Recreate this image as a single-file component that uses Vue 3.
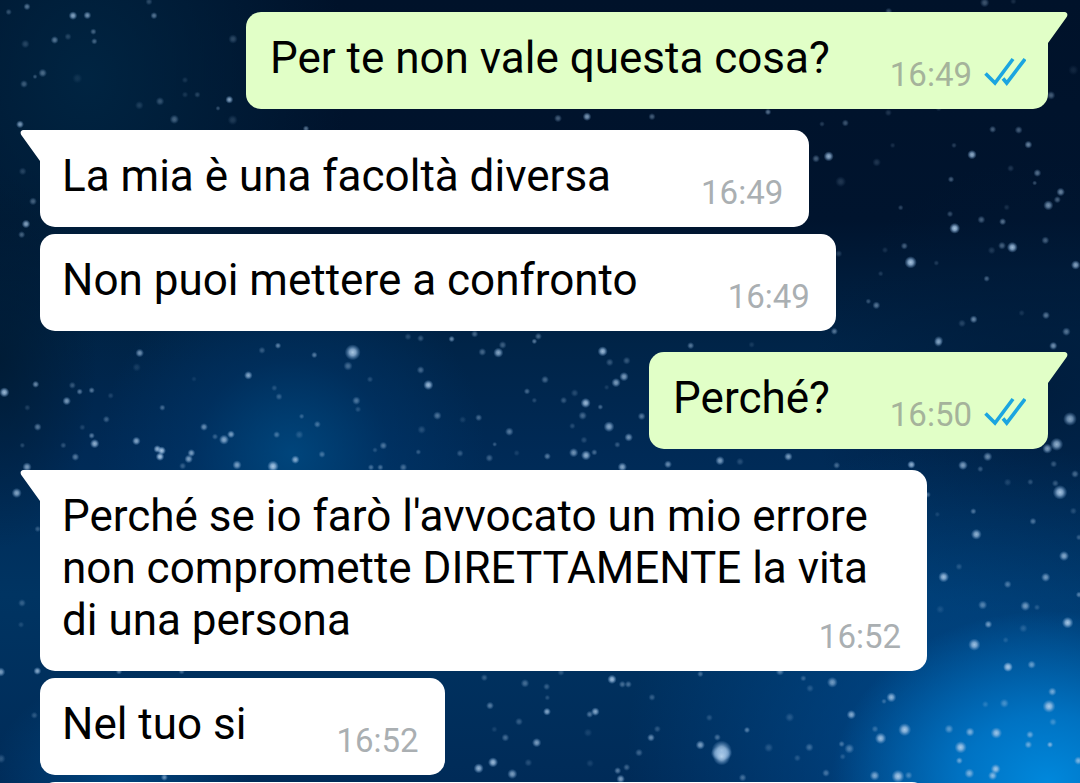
<script setup>
const messages = [
  { id: 1, side: 'out', tail: true, text: 'Per te non vale questa cosa?', time: '16:49' },
  { id: 2, side: 'in', tail: true, text: 'La mia è una facoltà diversa', time: '16:49' },
  { id: 3, side: 'in', text: 'Non puoi mettere a confronto', time: '16:49' },
  { id: 4, side: 'out', tail: true, text: 'Perché?', time: '16:50' },
  { id: 5, side: 'in', tail: true, text: "Perché se io farò l'avvocato un mio errore non compromette DIRETTAMENTE la vita di una persona", time: '16:52' },
  { id: 6, side: 'in', text: 'Nel tuo si', time: '16:52' },
]

// Star clusters: origin of each cluster, then [x, y, radius, opacity] in thirds of a unit.
const clusters = [
  { x: 0, y: 0, stars: [[26, 36, 9, 0.4], [81, 20, 10, 0.6], [219, 47, 12, 0.85], [262, 46, 11, 0.75], [280, 95, 9, 0.5], [283, 124, 9, 0.5], [204, 110, 10, 0.3], [164, 120, 11, 0.6], [76, 132, 12, 0.3], [128, 219, 12, 0.55], [105, 230, 7, 0.4], [72, 252, 11, 0.45], [232, 235, 14, 0.15], [447, 5, 10, 0.35], [462, 47, 10, 0.6], [699, 117, 13, 0.35], [555, 240, 9, 0.2], [592, 284, 9, 0.3], [555, 284, 9, 0.2], [480, 304, 12, 0.4], [418, 316, 12, 0.25], [688, 299, 11, 0.85], [654, 325, 7, 0.4], [523, 358, 13, 0.5], [698, 360, 14, 0.25], [60, 373, 11, 0.8], [1674, 355, 11, 0.5], [1761, 350, 12, 0.8], [1956, 350, 10, 0.5], [2304, 336, 9, 0.6], [918, 386, 9, 0.6]] },
  { x: 0, y: 110, stars: [[68, 184, 11, 0.3], [99, 274, 11, 0.5], [78, 342, 12, 0.85], [65, 374, 10, 0.5]] },
  { x: 860, y: 0, stars: [[374, 8, 13, 0.45], [86, 34, 10, 0.4], [460, 4, 9, 0.2], [640, 210, 14, 0.15], [573, 286, 12, 0.5], [85, 338, 10, 0.25], [236, 324, 9, 0.3]] },
  { x: 800, y: 110, stars: [[66, 42, 8, 0.3], [136, 39, 10, 0.45], [86, 139, 14, 0.9], [48, 146, 11, 0.5], [122, 215, 15, 0.25], [230, 157, 12, 0.25], [278, 106, 8, 0.2], [578, 58, 10, 0.5], [656, 60, 11, 0.5], [685, 104, 11, 0.7], [516, 134, 13, 0.9], [462, 106, 8, 0.3], [632, 175, 10, 0.25], [712, 189, 11, 0.6], [704, 219, 7, 0.4], [782, 246, 12, 0.7], [772, 269, 10, 0.5], [745, 286, 14, 0.75], [453, 208, 9, 0.5], [302, 293, 8, 0.35], [450, 312, 9, 0.4], [464, 355, 15, 1], [544, 329, 11, 0.5], [608, 335, 10, 0.6], [620, 292, 9, 0.2], [637, 412, 15, 0.95], [606, 407, 11, 0.5], [575, 421, 11, 0.25], [736, 391, 11, 0.5], [827, 465, 13, 0.85], [313, 408, 10, 0.5], [332, 457, 17, 1], [255, 420, 9, 0.2], [116, 431, 10, 0.3], [409, 459, 8, 0.25], [242, 491, 8, 0.25], [560, 506, 9, 0.5], [205, 574, 8, 0.4], [229, 586, 11, 0.6], [521, 628, 11, 0.7], [486, 640, 11, 0.3], [738, 616, 11, 0.6], [799, 665, 12, 0.6], [760, 707, 10, 0.5], [103, 664, 10, 0.6], [416, 692, 13, 0.7], [665, 609, 9, 0.2]] },
  { x: 0, y: 330, stars: [[13, 187, 14, 0.95], [107, 163, 10, 0.7], [217, 166, 10, 0.4], [239, 185, 9, 0.6], [275, 181, 9, 0.6], [200, 213, 12, 0.8], [332, 197, 9, 0.25], [419, 69, 12, 0.75], [410, 112, 12, 0.2], [487, 233, 9, 0.5], [319, 268, 10, 0.45], [113, 291, 11, 0.6], [82, 233, 9, 0.25], [247, 292, 9, 0.25], [275, 317, 9, 0.6], [284, 341, 13, 0.9], [190, 346, 9, 0.35], [226, 381, 11, 0.6], [67, 346, 8, 0.3], [409, 333, 12, 0.85], [472, 357, 11, 0.9], [485, 362, 12, 1], [480, 380, 12, 1], [612, 291, 11, 0.7], [672, 329, 14, 0.85], [693, 313, 11, 0.8], [645, 320, 9, 0.4], [574, 369, 11, 0.8], [566, 387, 12, 0.8], [548, 408, 10, 0.4], [711, 405, 13, 0.8], [819, 409, 16, 1], [886, 389, 12, 0.85], [966, 373, 10, 0.5], [830, 314, 10, 0.5], [898, 314, 12, 0.3], [952, 283, 10, 0.5], [905, 259, 8, 0.4], [745, 136, 12, 0.85], [823, 174, 9, 0.3], [837, 200, 10, 0.4], [834, 47, 9, 0.65], [786, 61, 10, 0.4], [943, 75, 9, 0.6], [582, 147, 8, 0.15], [81, 411, 13, 0.8]] },
  { x: 320, y: 330, stars: [[98, 67, 22, 1], [84, 108, 13, 0.5], [150, 148, 9, 0.3], [302, 120, 11, 0.5], [325, 165, 14, 0.95], [109, 212, 12, 0.55], [114, 238, 9, 0.3], [352, 257, 12, 0.55], [305, 299, 12, 0.3], [428, 269, 10, 0.2], [476, 263, 10, 0.5], [568, 305, 12, 0.6], [190, 347, 11, 0.55], [165, 360, 8, 0.3], [295, 366, 8, 0.4], [420, 370, 10, 0.4], [508, 384, 11, 0.45], [524, 343, 7, 0.4], [590, 369, 9, 0.2], [264, 20, 10, 0.3], [302, 25, 10, 0.4], [395, 27, 9, 0.7], [464, 12, 10, 0.5], [487, 66, 11, 0.5], [535, 68, 14, 0.85], [548, 45, 11, 0.45], [655, 19, 10, 0.5], [643, 34, 8, 0.6], [848, 64, 14, 0.95], [869, 97, 11, 0.4], [920, 92, 11, 0.4], [912, 140, 13, 0.8], [888, 158, 13, 0.8], [860, 172, 8, 0.2], [675, 149, 11, 0.5], [621, 184, 9, 0.5], [643, 211, 8, 0.3], [731, 211, 10, 0.4], [764, 189, 11, 0.3], [797, 219, 14, 0.95], [841, 231, 8, 0.5], [788, 257, 12, 0.5], [757, 288, 9, 0.3], [867, 290, 15, 0.85], [926, 322, 12, 0.75], [965, 259, 11, 0.6], [892, 344, 9, 0.4], [792, 330, 10, 0.3], [761, 368, 13, 0.75], [798, 376, 14, 0.9], [823, 367, 9, 0.5], [682, 379, 10, 0.6], [907, 411, 13, 0.85], [250, 412, 11, 0.5], [153, 412, 9, 0.5], [181, 412, 9, 0.5]] },
  { x: 640, y: 340, stars: [[152, 17, 10, 0.6], [335, 14, 9, 0.2], [895, 8, 12, 0.6], [1240, 18, 12, 0.5], [1290, 237, 19, 0.85], [1250, 313, 18, 0.9], [1222, 326, 14, 0.8], [1043, 350, 13, 0.7], [970, 376, 13, 0.5], [813, 374, 11, 0.6], [590, 376, 10, 0.5], [445, 350, 12, 0.8], [240, 362, 13, 0.8], [84, 373, 11, 0.7], [300, 365, 11, 0.3]] },
  { x: 900, y: 440, stars: [[35, 74, 11, 0.7], [188, 76, 13, 0.6], [241, 87, 9, 0.4], [480, 157, 20, 1], [466, 130, 10, 0.4], [461, 72, 10, 0.4], [525, 102, 11, 0.5], [391, 126, 9, 0.35], [323, 127, 11, 0.25], [83, 164, 9, 0.5], [220, 214, 9, 0.55], [229, 283, 15, 0.9], [112, 223, 8, 0.2], [399, 244, 10, 0.55], [520, 213, 10, 0.3], [492, 348, 14, 0.85], [437, 412, 13, 0.75], [131, 411, 15, 0.95], [177, 380, 10, 0.3], [323, 433, 11, 0.55], [248, 495, 13, 0.6], [376, 498, 14, 0.75], [411, 502, 9, 0.3], [121, 508, 12, 0.2], [265, 553, 11, 0.75], [370, 565, 12, 0.3], [503, 548, 16, 1], [223, 614, 17, 0.95], [317, 600, 9, 0.25], [324, 681, 13, 0.8], [394, 674, 11, 0.5], [537, 464, 9, 0.6], [537, 292, 9, 0.4]] },
  { x: 0, y: 460, stars: [[50, 99, 14, 0.85], [66, 429, 11, 0.4], [63, 494, 9, 0.25], [112, 633, 11, 0.85], [2, 636, 13, 0.8], [103, 766, 10, 0.35], [3, 896, 13, 0.35], [357, 634, 9, 0.6], [545, 634, 9, 0.5], [493, 952, 10, 0.7], [113, 207, 9, 0.4]] },
  { x: 430, y: 660, stars: [[163, 53, 10, 0.4], [285, 70, 12, 0.5], [350, 80, 10, 0.4], [393, 37, 10, 0.35], [546, 58, 13, 0.95], [577, 73, 10, 0.5], [595, 73, 10, 0.5], [180, 137, 11, 0.6], [351, 155, 11, 0.85], [352, 113, 8, 0.3], [267, 185, 11, 0.4], [193, 208, 9, 0.2], [226, 233, 11, 0.5], [320, 248, 13, 0.8], [189, 307, 14, 0.95], [146, 325, 14, 0.9], [247, 342, 14, 0.8], [295, 308, 11, 0.3], [496, 155, 12, 0.85], [479, 163, 10, 0.55], [474, 218, 12, 0.2], [666, 112, 10, 0.4], [811, 42, 9, 0.5], [838, 173, 10, 0.3], [682, 207, 10, 0.35], [663, 233, 11, 0.7], [627, 278, 11, 0.45], [590, 322, 10, 0.45], [563, 332, 10, 0.6], [572, 357, 12, 0.8], [480, 310, 11, 0.2], [811, 255, 13, 0.8], [862, 232, 10, 0.5], [862, 280, 18, 0.8], [887, 280, 18, 0.8], [875, 272, 28, 1], [875, 290, 24, 1], [951, 210, 9, 0.6], [938, 353, 11, 0.5]] },
  { x: 750, y: 660, stars: [[90, 34, 12, 0.6], [160, 55, 9, 0.4], [180, 85, 11, 0.3], [247, 67, 15, 0.75], [424, 112, 14, 0.9], [402, 124, 8, 0.4], [304, 164, 13, 0.85], [119, 172, 13, 0.3], [375, 207, 10, 0.4], [392, 235, 16, 0.95], [464, 209, 18, 1], [275, 252, 9, 0.5], [298, 266, 14, 0.55], [278, 290, 9, 0.3], [178, 262, 12, 0.45], [56, 263, 13, 0.3], [142, 294, 10, 0.3], [228, 339, 11, 0.5], [374, 347, 14, 0.8], [444, 349, 18, 1], [476, 346, 11, 0.5], [597, 207, 13, 0.6], [632, 262, 17, 1], [660, 216, 13, 0.8], [739, 219, 16, 0.95], [628, 302, 10, 0.7], [658, 340, 14, 0.8], [737, 327, 14, 0.95], [728, 347, 13, 0.85], [840, 224, 11, 0.7], [835, 254, 11, 0.7], [900, 254, 9, 0.8], [897, 139, 18, 1], [907, 95, 12, 0.75], [909, 186, 11, 0.45], [774, 21, 14, 0.75], [846, 14, 12, 0.4], [763, 130, 13, 0.5], [706, 133, 10, 0.3], [985, 302, 12, 0.8]] },
]
const stars = clusters.flatMap(c =>
  c.stars.map(([x, y, r, o]) => ({ cx: c.x + x / 3, cy: c.y + y / 3, r: r / 3, o: o * o * 0.25 + o * 0.65 })))
</script>

<template>
  <main class="chat">
    <svg class="sky" viewBox="0 0 1080 783" preserveAspectRatio="xMidYMid slice" aria-hidden="true">
      <defs>
        <radialGradient id="star">
          <stop offset="0" stop-color="#bcd8f2" />
          <stop offset="0.4" stop-color="#a0c2e4" stop-opacity="0.85" />
          <stop offset="1" stop-color="#6f9fd0" stop-opacity="0" />
        </radialGradient>
      </defs>
      <circle v-for="(s, i) in stars" :key="i" :cx="s.cx" :cy="s.cy" :r="s.r * 1.1" :opacity="s.o" fill="url(#star)" />
    </svg>

    <ol class="thread">
      <li v-for="m in messages" :key="m.id" class="bubble" :class="[m.side, { tailed: m.tail }]">
        <svg v-if="m.tail" class="tail" viewBox="0 0 21 32" aria-hidden="true">
          <path d="M0 0H17.5Q20.5 .3 20.4 3Q20.3 4.500 19 6L1 31V32H0Z" fill="currentColor" />
        </svg>
        <span class="text">{{ m.text }}</span>
        <div class="meta">
          <time>{{ m.time }}</time>
          <svg v-if="m.side === 'out'" class="ticks" viewBox="0 0 42 30" role="img" aria-label="Letto">
            <path d="M1.500 16.500L11 26L29 2M19 21.500L22.700 26L41 2" fill="none" stroke="#1ba5e0" stroke-width="3.600" />
          </svg>
        </div>
      </li>
      <li class="bubble in next"></li>
    </ol>
  </main>
</template>

<style>
body {
  margin: 0;
}
</style>

<style scoped>
.chat {
  position: relative;
  height: 100vh;
  overflow: hidden;
  font-family: Roboto, "Liberation Sans", sans-serif;
  background:
    radial-gradient(ellipse 20% 22% at 97% 100%, #0088dc 0%, rgba(0, 126, 210, 0.8) 40%, rgba(0, 100, 180, 0) 100%),
    radial-gradient(ellipse 32% 40% at 90% 96%, rgba(0, 84, 160, 0.7) 0%, rgba(0, 80, 150, 0) 100%),
    radial-gradient(ellipse 18% 24% at 27% 58%, rgba(0, 78, 136, 0.75) 0%, rgba(0, 62, 120, 0.35) 50%, rgba(0, 50, 104, 0) 100%),
    radial-gradient(ellipse 12% 14% at 11% 100%, rgba(0, 84, 150, 0.6) 0%, rgba(0, 72, 130, 0) 100%),
    radial-gradient(ellipse 22% 30% at 97% 50%, rgba(0, 26, 56, 0.7) 0%, rgba(0, 26, 56, 0) 100%),
    radial-gradient(ellipse 9% 24% at 0% 46%, rgba(0, 26, 50, 0.8) 0%, rgba(0, 26, 56, 0) 100%),
    radial-gradient(ellipse 24% 40% at 8% 10%, rgba(0, 38, 68, 0.9) 0%, rgba(0, 36, 66, 0) 100%),
    linear-gradient(180deg, #00122a 0%, #00142e 28%, #002448 44%, #002a56 58%, #003462 76%, #002b58 100%);
}

.sky {
  position: absolute;
  inset: 0;
  width: 100%;
  height: 100%;
}

.thread {
  position: relative;
  display: flex;
  flex-direction: column;
  gap: 7px;
  margin: 0;
  padding: 12px 32px 0 40px;
  list-style: none;
}

.bubble {
  position: relative;
  display: flow-root;
  box-sizing: border-box;
  max-width: 88%;
  border-radius: 15px;
  font-size: 44px;
  line-height: 52px;
}

.in {
  align-self: flex-start;
  padding: 20px 26px 14px 22px;
  color: #fff;
  background: #fff;
}

.out {
  align-self: flex-end;
  padding: 20px 22px 14px 24px;
  color: #e1ffc7;
  background: #e1ffc7;
}

.tailed {
  margin-top: 14px;
}

.tailed:first-child {
  margin-top: 0;
}

.in.tailed {
  border-top-left-radius: 0;
}

.out.tailed {
  border-top-right-radius: 0;
}

.tail {
  position: absolute;
  top: 0;
  width: 21px;
  height: 32px;
}

.out .tail {
  left: calc(100% - 1px);
}

.in .tail {
  right: calc(100% - 1px);
  transform: scaleX(-1);
}

.text {
  color: #000;
}

.meta {
  float: right;
  display: flex;
  align-items: flex-start;
  gap: 12px;
  height: 40px;
  margin-top: 23px;
  margin-left: 90px;
  font-size: 33px;
  line-height: 40px;
  color: #aaafb2;
}

.out .meta {
  margin-left: 60px;
  color: #a5b39b;
}

.ticks {
  width: 42px;
  height: 30px;
  margin-top: 2px;
}

.next {
  width: 100%;
  height: 97px;
}
</style>
